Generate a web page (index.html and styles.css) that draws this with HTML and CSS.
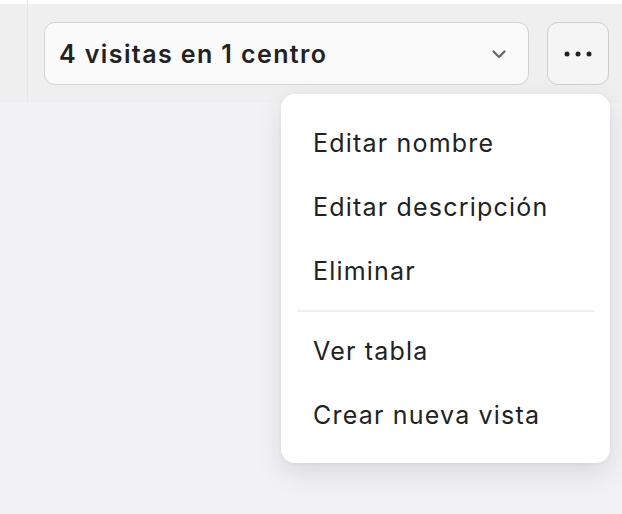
FILE: index.html
```html
<!DOCTYPE html>
<html lang="es">
<head>
<meta charset="utf-8">
<title>Vista</title>
<link rel="stylesheet" href="styles.css">
</head>
<body>
<div class="page">
  <div class="strip"></div>
  <div class="toolbar">
    <div class="select">
      <span class="select-label">4 visitas en 1 centro</span>
      <svg class="chevron" width="14" height="9" viewBox="0 0 14 9"><path d="M1.5 1.5 L7 7 L12.5 1.5" fill="none" stroke="#666" stroke-width="2.2" stroke-linecap="round" stroke-linejoin="round"/></svg>
    </div>
    <button class="more" type="button" aria-label="Más opciones">
      <svg width="28" height="8" viewBox="0 0 28 8"><circle cx="3" cy="4" r="2.5" fill="#222"/><circle cx="14" cy="4" r="2.5" fill="#222"/><circle cx="25" cy="4" r="2.5" fill="#222"/></svg>
    </button>
  </div>
  <div class="menu">
    <div class="menu-item">Editar nombre</div>
    <div class="menu-item">Editar descripción</div>
    <div class="menu-item">Eliminar</div>
    <div class="menu-divider"></div>
    <div class="menu-item">Ver tabla</div>
    <div class="menu-item">Crear nueva vista</div>
  </div>
</div>
</body>
</html>
```
FILE: styles.css
```css
* { box-sizing: border-box; }
html, body { margin: 0; padding: 0; }
body {
  background: #f2f2f4;
  font-family: Inter, "Noto Sans", sans-serif;
  color: #1f1f1f;
  width: 622px;
  height: 514px;
  overflow: hidden;
}
.page { position: relative; width: 622px; height: 514px; }
.strip {
  height: 4px;
  background: linear-gradient(90deg, #ffffff 27px, #e2e2e2 27px, #e2e2e2 28px, #ffffff 28px);
}
.toolbar {
  height: 99px;
  display: flex;
  align-items: center;
  gap: 18px;
  padding: 0 13px 0 44px;
  background: linear-gradient(90deg, #efefef 27px, #e6e6e6 27px, #e6e6e6 28px, #efefef 28px);
}
.select {
  flex: 1;
  height: 63px;
  border: 1.5px solid #d3d3d3;
  border-radius: 11px;
  background: #fafafa;
  display: flex;
  align-items: center;
  justify-content: space-between;
  padding: 0 22px 0 14px;
}
.select-label {
  font-size: 25px;
  font-weight: 600;
  color: #222;
  letter-spacing: 1.4px;
}
.chevron { display: block; margin-top: 1px; }
.more {
  width: 62px;
  height: 63px;
  border: 1.5px solid #cfcfcf;
  border-radius: 11px;
  background: #f5f5f5;
  display: flex;
  align-items: center;
  justify-content: center;
  padding: 0;
}
.more svg { display: block; }
.menu {
  position: absolute;
  left: 281px;
  top: 94px;
  width: 329px;
  background: #ffffff;
  border-radius: 14px;
  box-shadow: 0 10px 28px rgba(0, 0, 0, 0.10), 0 1px 4px rgba(0, 0, 0, 0.05);
  padding: 17px 0 16px;
}
.menu-item {
  height: 64px;
  display: flex;
  align-items: center;
  padding-left: 32px;
  font-size: 25px;
  letter-spacing: 1.2px;
  color: #222;
}
.menu-divider {
  height: 2px;
  background: #efefef;
  margin: 7px 16px;
}
```
